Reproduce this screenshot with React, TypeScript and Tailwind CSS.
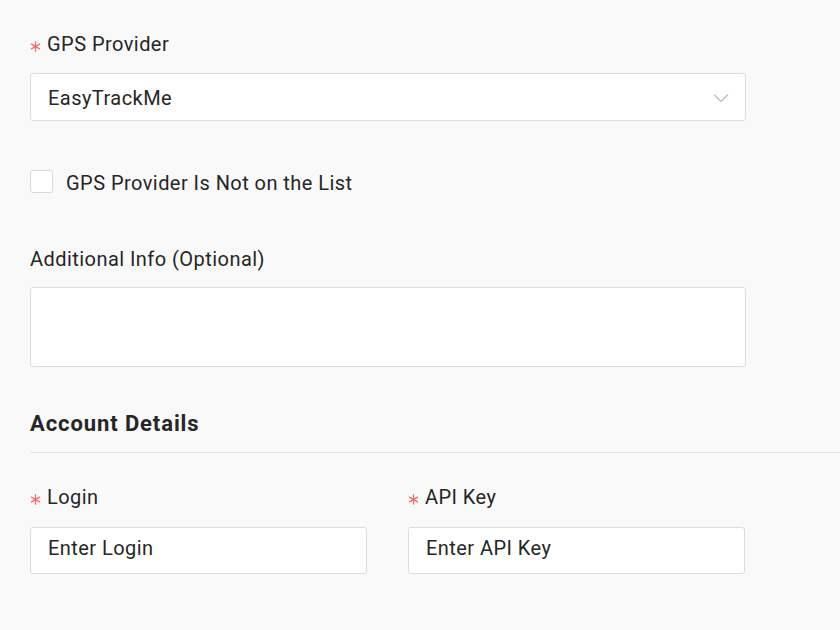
import React from "react";

const Req = () => (
  <svg width="11" height="11" viewBox="0 0 11 11" className="mr-[6px] mt-[4px] shrink-0">
    <g stroke="#f56c6c" strokeWidth="1.3" strokeLinecap="round">
      <line x1="5.5" y1="0.8" x2="5.5" y2="10.2" />
      <line x1="1.4" y1="3.15" x2="9.6" y2="7.85" />
      <line x1="1.4" y1="7.85" x2="9.6" y2="3.15" />
    </g>
  </svg>
);

const Field = ({ label, placeholder }: { label: string; placeholder: string }) => (
  <div className="w-[337px] flex flex-col gap-[18px]">
    <div className="flex items-center h-[24px]">
      <Req />
      <span>{label}</span>
    </div>
    <div className="h-[47px] bg-white border border-[#dcdcdc] rounded-[3px] flex items-center pl-[17px] pb-[6px]">
      {placeholder}
    </div>
  </div>
);

export default function App() {
  return (
    <div
      className="w-[840px] h-[630px] bg-[#f9f9f9] text-[#262626] overflow-hidden text-[20px] tracking-[0.45px]"
      style={{ fontFamily: "Roboto, 'Noto Sans', sans-serif" }}
    >
      <div className="pl-[30px] pt-[32px] flex flex-col">
        <div className="w-[716px] flex flex-col">
          <div className="flex items-center h-[24px]">
            <Req />
            <span>GPS Provider</span>
          </div>
          <div className="mt-[17px] h-[48px] bg-white border border-[#dcdcdc] rounded-[3px] flex items-center justify-between pl-[17px] pr-[16px] pt-[2px]">
            <span>EasyTrackMe</span>
            <svg width="16" height="10" viewBox="0 0 16 10" fill="none">
              <path d="M1 1.5 L8 8.5 L15 1.5" stroke="#b8b8b8" strokeWidth="1.1" />
            </svg>
          </div>
          <div className="mt-[49px] flex items-center gap-[13px] h-[23px]">
            <div className="w-[23px] h-[23px] bg-white border border-[#d8d8d8] rounded-[3px]" />
            <span className="pt-[2px]">GPS Provider Is Not on the List</span>
          </div>
          <div className="mt-[54px] h-[24px] flex items-center">Additional Info (Optional)</div>
          <div className="mt-[16px] h-[80px] bg-white border border-[#dcdcdc] rounded-[3px]" />
        </div>
        <div className="mt-[42px] text-[22px] tracking-[0.9px] font-bold h-[28px] flex items-center">Account Details</div>
        <div className="mt-[15px] h-px bg-[#e4e4e4]" />
        <div className="mt-[32px] flex gap-[41px] w-[716px]">
          <Field label="Login" placeholder="Enter Login" />
          <Field label="API Key" placeholder="Enter API Key" />
        </div>
      </div>
    </div>
  );
}
